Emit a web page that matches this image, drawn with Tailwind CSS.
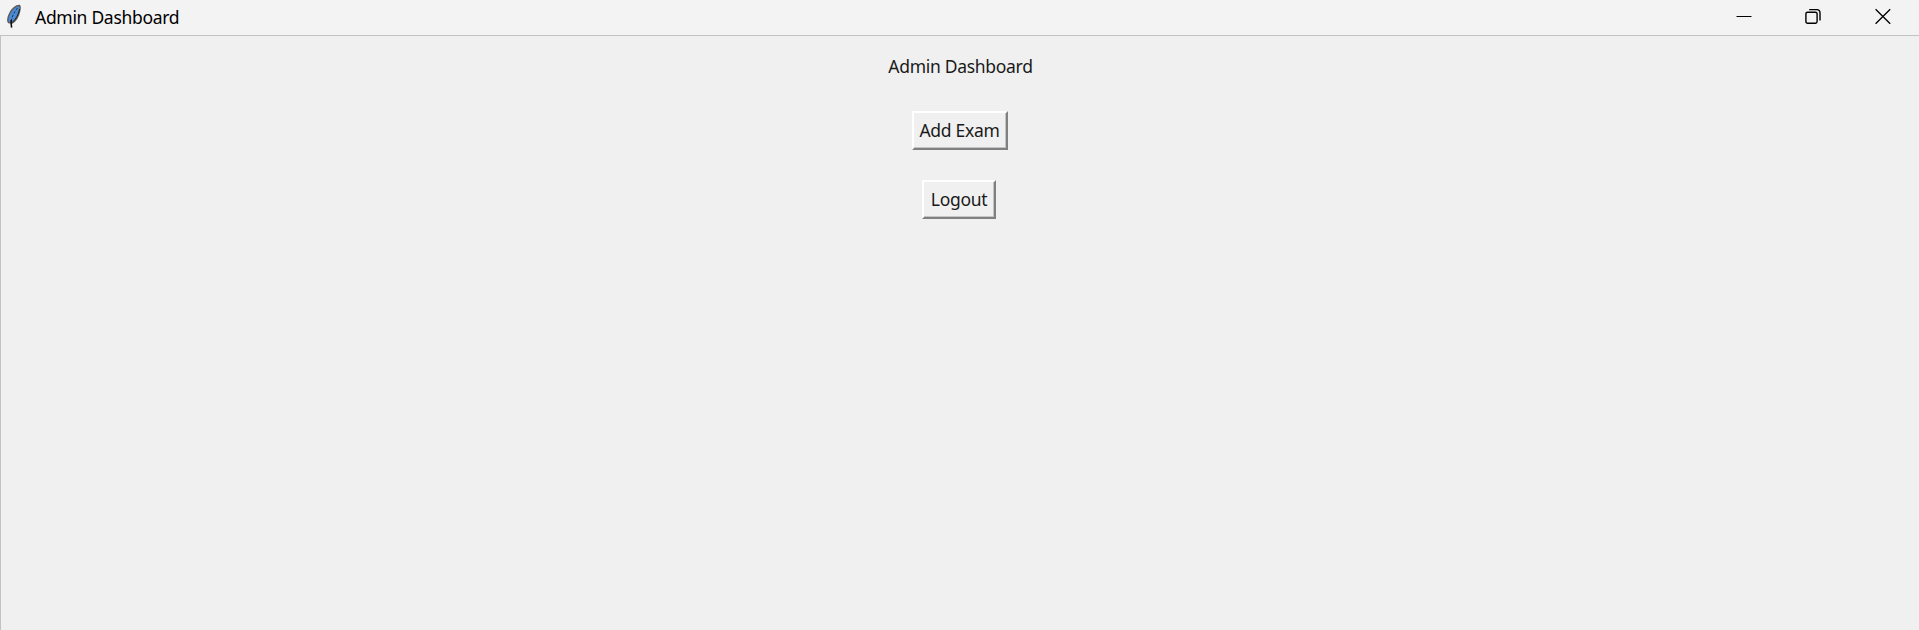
<!DOCTYPE html>
<html lang="en">
<head>
<meta charset="utf-8">
<title>Admin Dashboard</title>
<script src="https://cdn.jsdelivr.net/npm/@tailwindcss/browser@4"></script>
</head>
<body class="flex h-screen flex-col overflow-hidden bg-[#f0f0f0] font-['Noto_Sans','Open_Sans',sans-serif] text-black">
  <header class="flex h-[35px] shrink-0 items-start justify-between bg-[#f3f3f3]">
    <div class="flex items-start">
      <svg class="ml-[6px] mt-[4px] h-[25px] w-4" viewBox="0 0 16 25">
        <path d="M13.6 1.6 C10 1.4 5.5 5 3.4 10 C1.6 14 1.4 17 2.6 18.6 L6 19 C9.4 17 12.6 12 13.6 7 C14.2 4.4 14.2 2.4 13.6 1.6Z" fill="#4b8bd6" stroke="#5c5c5c" stroke-width="1.5"/>
        <path d="M6.2 18.4 C9.8 15.5 12.6 10.5 13.6 5" fill="none" stroke="#222" stroke-width="1"/>
        <path d="M5.2 17 C6.2 12 8.4 7.5 11.5 4" fill="none" stroke="#1d3557" stroke-width="1" stroke-dasharray="2.5 1.5"/>
        <path d="M5.2 16 L5.2 20 L5.6 23.6" fill="none" stroke="#111" stroke-width="1.6"/>
      </svg>
      <h1 class="ml-[13px] mt-[5px] whitespace-nowrap text-[17.5px] leading-[25px] tracking-[-0.3px]">Admin Dashboard</h1>
    </div>
    <div class="flex items-start">
      <svg class="mr-[53px] mt-[8px] h-4 w-4" viewBox="0 0 16 16"><path d="M.5 8.5H15.5" stroke="#000" stroke-width="1"/></svg>
      <svg class="mr-[54px] mt-[8px] h-4 w-4" viewBox="0 0 16 16" fill="none" stroke="#000" stroke-width="1.4"><rect x=".9" y="4.2" width="11.2" height="11" rx="1.6"/><path d="M4.2 1.6H11.8Q15 1.6 15 4.8V12.6"/></svg>
      <svg class="mr-[28px] mt-[8px] h-4 w-4" viewBox="0 0 16 16"><path d="M.6 1.2L15.2 15.8M15.2 1.2L.6 15.8" stroke="#000" stroke-width="1.3"/></svg>
    </div>
  </header>
  <main class="flex grow flex-col items-center border-l border-t border-[#c3c3c3]">
    <p class="mt-[17px] whitespace-nowrap pl-px text-[17.5px] leading-[26px] tracking-[-0.3px] text-[#1a1a1a]">Admin Dashboard</p>
    <button class="mt-8 mr-px flex h-[39px] w-[96px] items-center justify-center whitespace-nowrap border-2 border-b-[#808080] border-l-white border-r-[#808080] border-t-white text-[17.5px] tracking-[-0.3px] text-[#1a1a1a] shadow-[inset_-1px_-1px_0_#c4c4c4]">Add Exam</button>
    <button class="mt-[30px] mr-[2px] flex h-[39px] w-[74px] items-center justify-center whitespace-nowrap border-2 border-b-[#808080] border-l-white border-r-[#808080] border-t-white text-[17.5px] tracking-[-0.3px] text-[#1a1a1a] shadow-[inset_-1px_-1px_0_#c4c4c4]">Logout</button>
  </main>
</body>
</html>
